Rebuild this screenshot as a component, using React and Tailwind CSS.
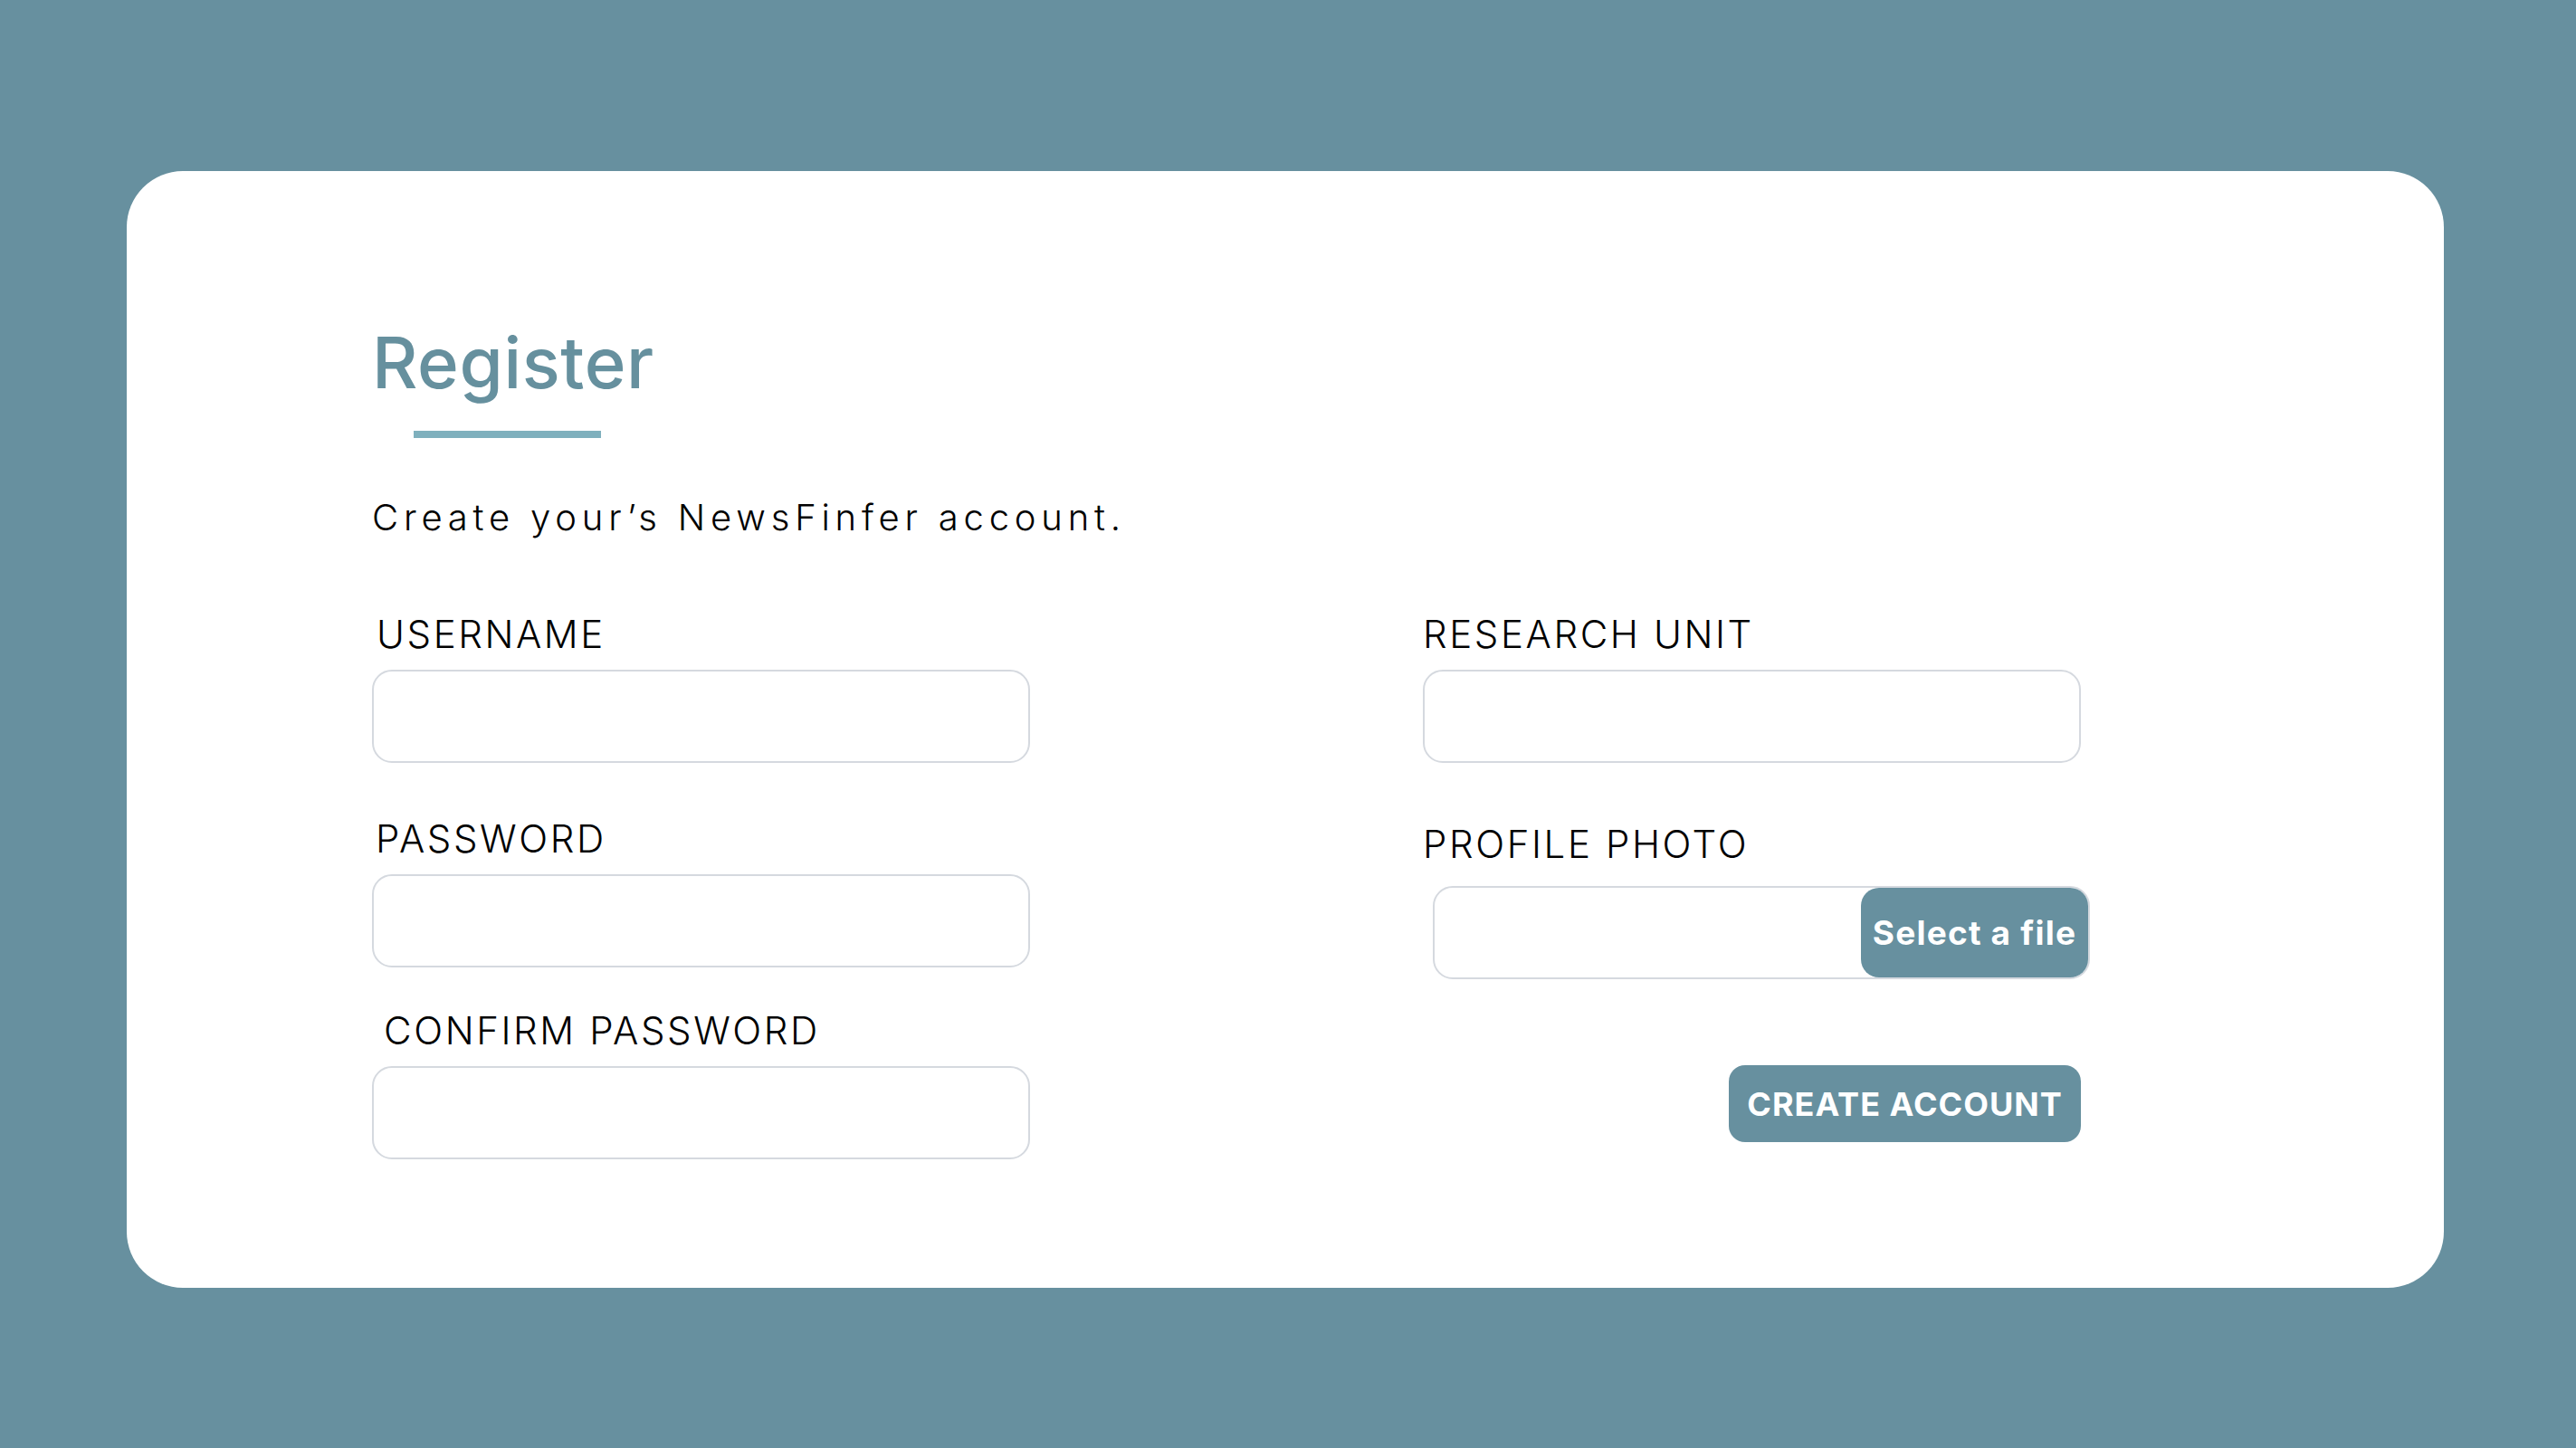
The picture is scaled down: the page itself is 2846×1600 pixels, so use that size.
import React from 'react';

const Field = ({ label, className = '', labelClass = '' }) => (
  <div className={`flex flex-col ${className}`}>
    <label className={`text-[42px] leading-[42px] font-light tracking-[2.6px] text-black ${labelClass}`}>
      {label}
    </label>
    <input
      type="text"
      className="mt-[18px] h-[103px] w-full rounded-[22px] border-2 border-[#d5d9df] bg-white px-6 text-[32px] outline-none"
    />
  </div>
);

const App = () => {
  return (
    <div className="min-h-[1600px] w-full bg-[#67909f] pt-[189px] pl-[140px] font-['Inter',sans-serif]">
      <div className="h-[1234px] w-[2560px] rounded-[62px] bg-white pl-[271px] pt-[173px]">
        {/* Header */}
        <h1 className="text-[78px] leading-none font-medium tracking-[0.6px] text-[#66909e]">Register</h1>
        <div className="ml-[46px] mt-[36px] h-[8px] w-[207px] bg-[#7fb0bd]" />
        <p className="mt-[68px] text-[40px] leading-none font-light tracking-[5.8px] text-black">
          Create your’s NewsFinfer account.
        </p>

        {/* Form */}
        <div className="mt-[88px] grid grid-cols-[727px_727px] gap-x-[434px]">
          <div className="flex flex-col">
            <Field label="USERNAME" labelClass="pl-[5px]" />
            <Field label="PASSWORD" className="mt-[63px]" labelClass="pl-[4px]" />
            <Field label="CONFIRM PASSWORD" className="mt-[49px]" labelClass="pl-[13px]" />
          </div>

          <div className="flex flex-col">
            <Field label="RESEARCH UNIT" />
            <label className="mt-[69px] text-[42px] leading-[42px] font-light tracking-[2.6px] text-black">
              PROFILE PHOTO
            </label>
            <div className="mt-[25px] ml-[11px] flex h-[103px] w-[726px] justify-end rounded-[22px] border-2 border-[#d5d9df] bg-white">
              <button className="h-full w-[251px] rounded-[20px] bg-[#67909f] text-[37px] font-bold tracking-[1.2px] text-white">
                Select a file
              </button>
            </div>
            <button className="mt-[95px] h-[85px] w-[389px] self-end rounded-[18px] bg-[#67909f] text-[36px] font-bold tracking-[1px] text-white">
              CREATE ACCOUNT
            </button>
          </div>
        </div>
      </div>
    </div>
  );
};

export default App;
